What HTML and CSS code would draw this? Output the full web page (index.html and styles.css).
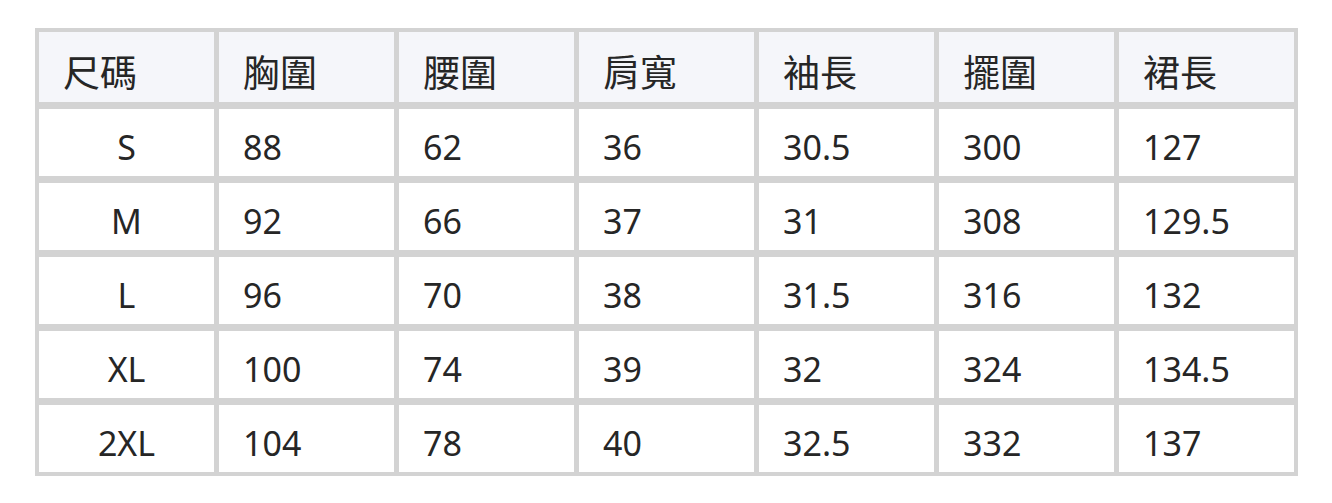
FILE: index.html
```html
<!DOCTYPE html>
<html lang="zh-Hant">
<head>
<meta charset="utf-8">
<title>尺碼表</title>
<link rel="stylesheet" href="styles.css">
</head>
<body>
<div class="chart">
  <div class="cell head">尺碼</div>
  <div class="cell head">胸圍</div>
  <div class="cell head">腰圍</div>
  <div class="cell head">肩寬</div>
  <div class="cell head">袖長</div>
  <div class="cell head">擺圍</div>
  <div class="cell head">裙長</div>

  <div class="cell size">S</div>
  <div class="cell">88</div>
  <div class="cell">62</div>
  <div class="cell">36</div>
  <div class="cell">30.5</div>
  <div class="cell">300</div>
  <div class="cell">127</div>

  <div class="cell size">M</div>
  <div class="cell">92</div>
  <div class="cell">66</div>
  <div class="cell">37</div>
  <div class="cell">31</div>
  <div class="cell">308</div>
  <div class="cell">129.5</div>

  <div class="cell size">L</div>
  <div class="cell">96</div>
  <div class="cell">70</div>
  <div class="cell">38</div>
  <div class="cell">31.5</div>
  <div class="cell">316</div>
  <div class="cell">132</div>

  <div class="cell size">XL</div>
  <div class="cell">100</div>
  <div class="cell">74</div>
  <div class="cell">39</div>
  <div class="cell">32</div>
  <div class="cell">324</div>
  <div class="cell">134.5</div>

  <div class="cell size">2XL</div>
  <div class="cell">104</div>
  <div class="cell">78</div>
  <div class="cell">40</div>
  <div class="cell">32.5</div>
  <div class="cell">332</div>
  <div class="cell">137</div>
</div>
</body>
</html>
```
FILE: styles.css
```css
html, body {
  margin: 0;
  padding: 0;
  background: #ffffff;
}
body {
  font-family: "Noto Sans", "Noto Sans CJK TC", sans-serif;
  color: #262626;
}
.chart {
  display: grid;
  grid-template-columns: repeat(7, 175px);
  grid-template-rows: 70px repeat(5, 67px);
  gap: 7px 5px;
  padding: 4px;
  background: #d3d3d3;
  width: fit-content;
  margin: 28px 0 0 35px;
}
.cell {
  background: #ffffff;
  display: flex;
  align-items: center;
  padding: 8px 0 0 24px;
  box-sizing: border-box;
  font-size: 34px;
  line-height: 1;
}
.head {
  background: #f5f6fa;
  font-size: 37px;
  padding-top: 10px;
}
.size {
  justify-content: center;
  padding-left: 0;
}
```
